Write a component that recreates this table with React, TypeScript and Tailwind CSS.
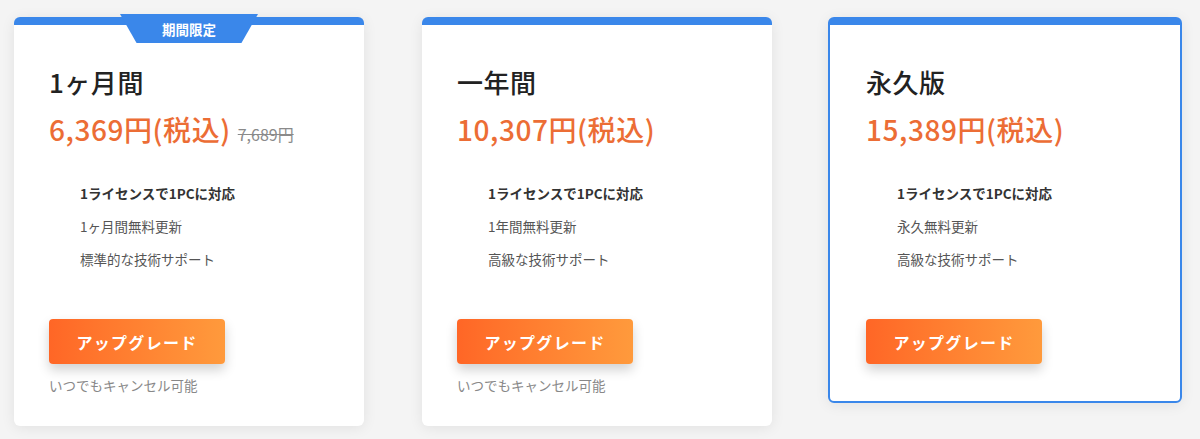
const PLANS = [
  {
    id: "month",
    title: "1ヶ月間",
    price: "6,369円(税込)",
    oldPrice: "7,689円",
    badge: "期間限定",
    features: ["1ライセンスで1PCに対応", "1ヶ月間無料更新", "標準的な技術サポート"],
    cancel: true,
  },
  {
    id: "year",
    title: "一年間",
    price: "10,307円(税込)",
    features: ["1ライセンスで1PCに対応", "1年間無料更新", "高級な技術サポート"],
    cancel: true,
  },
  {
    id: "forever",
    title: "永久版",
    price: "15,389円(税込)",
    features: ["1ライセンスで1PCに対応", "永久無料更新", "高級な技術サポート"],
    cancel: false,
    highlight: true,
  },
];

const FONT = "font-['Noto_Sans_CJK_JP','Noto_Sans',sans-serif]";

export default function App() {
  return (
    <div className={`min-h-[439px] w-[1200px] bg-[#f4f4f4] pt-[17px] pl-[14px] flex items-start ${FONT}`}>
      {PLANS.map((plan, idx) => (
        <div
          key={plan.id}
          className={
            "relative bg-white rounded-[6px] border-t-[8px] border-[#3a87ea] shadow-[0_2px_14px_rgba(0,0,0,0.08)] " +
            (plan.highlight
              ? "w-[354px] ml-[56px] border-x-2 border-b-2 pl-[36px] pb-[37px]"
              : idx === 0
              ? "w-[350px] pl-[35px] pb-[31px]"
              : "w-[350px] ml-[58px] pl-[35px] pb-[31px]")
          }
        >
          {plan.badge && (
            <div className="absolute left-[106px] top-[-11px] w-[138px] h-[29px] bg-[#3a87ea] [clip-path:polygon(0_0,100%_0,88%_100%,12%_100%)] flex items-center justify-center pt-[3px]">
              <span className="text-white text-[13.5px] font-bold leading-none">{plan.badge}</span>
            </div>
          )}

          <h2 className="pt-[37px] text-[26px] leading-[39px] font-medium tracking-[0.02em] text-[#222]">{plan.title}</h2>

          <div className="mt-[8px] flex items-baseline gap-[7px]">
            <span className="text-[28px] leading-[40px] font-medium tracking-[0.02em] text-[#ec6d35]">{plan.price}</span>
            {plan.oldPrice && (
              <span className="text-[16px] text-[#8a8a8a] line-through">{plan.oldPrice}</span>
            )}
          </div>

          <ul className="mt-[28px] pl-[31px]">
            {plan.features.map((f, i) => (
              <li
                key={i}
                className={
                  "text-[13.5px] leading-[33px] " +
                  (i === 0 ? "font-bold text-[#333]" : "text-[#555]")
                }
              >
                {f}
              </li>
            ))}
          </ul>

          <button className="mt-[43px] w-[176px] h-[45px] rounded-[4px] bg-gradient-to-r from-[#ff6626] to-[#ff9a3c] text-white text-[16px] font-bold tracking-[0.08em] shadow-[0_6px_12px_rgba(0,0,0,0.18)]">
            アップグレード
          </button>

          {plan.cancel && (
            <p className="mt-[11px] text-[13.5px] leading-[20px] text-[#888]">いつでもキャンセル可能</p>
          )}
        </div>
      ))}
    </div>
  );
}
